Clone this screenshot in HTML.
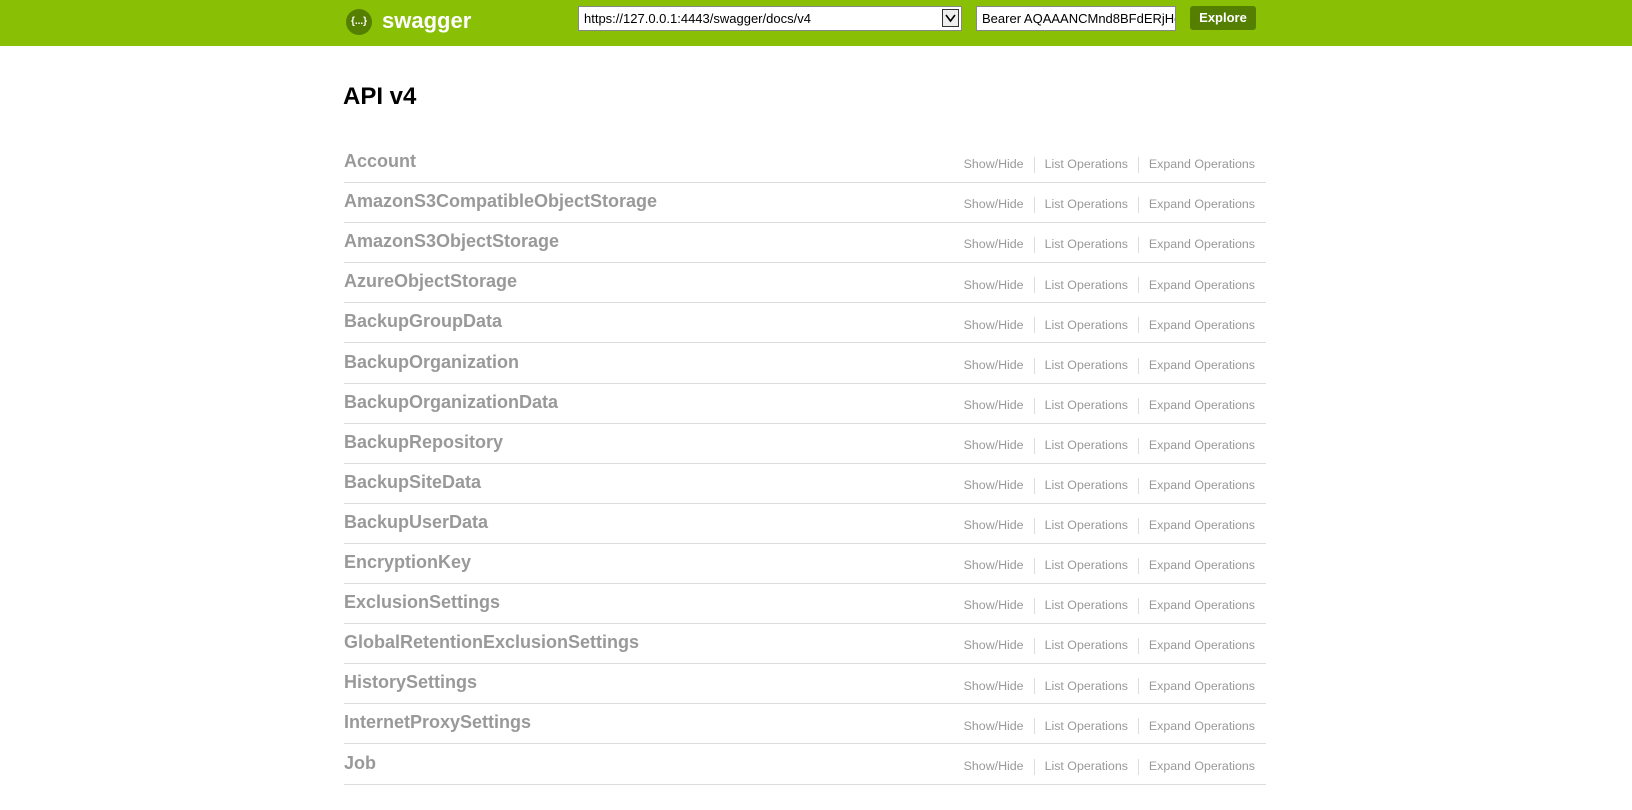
<!DOCTYPE html>
<html><head><meta charset="utf-8"><style>
body{margin:0;background:#fff;font-family:"Liberation Sans",Arial,sans-serif;width:1632px;height:810px;overflow:hidden;position:relative}
.hdr{position:absolute;left:0;top:0;width:1632px;height:46px;background:#89bf04}
.logo{position:absolute;left:346px;top:9px;width:26px;height:26px;border-radius:50%;background:#547f00;color:#fff;font-size:10px;font-weight:bold;text-align:center;line-height:26px}
.brand{position:absolute;left:382px;top:8px;color:#fff;font-weight:bold;font-size:22px}
.sel{position:absolute;left:578px;top:6px;width:384px;height:25px;background:#fff;border:1px solid #888;box-sizing:border-box;font-size:13px;line-height:23px;padding-left:5px}
.arr{position:absolute;right:2px;top:2px;width:17px;height:18px;border:1px solid #333;box-sizing:border-box;background:#eee}
.inp{position:absolute;left:976px;top:6px;width:200px;height:25px;background:#fff;border:1px solid #888;box-sizing:border-box;font-size:13px;line-height:23px;padding-left:5px;overflow:hidden;white-space:nowrap}
.btn{position:absolute;left:1190px;top:6px;width:66px;height:24px;background:#547f00;border-radius:3px;color:#fff;font-weight:bold;font-size:13px;text-align:center;line-height:24px}
h1{position:absolute;left:343px;top:83px;margin:0;font-size:24px;font-weight:bold;color:#000}
.row{position:absolute;left:344px;width:922px;height:40px;border-bottom:1px solid #ddd;box-sizing:border-box}
.row b{position:absolute;left:0;top:8px;font-size:18px;color:#999}
.ops{position:absolute;right:11px;top:14px;font-size:12.4px;color:#999}
.ops span{display:inline-block}
.sep{display:inline-block;width:1px;height:16px;background:#ddd;vertical-align:middle;margin:0 10px}
</style></head><body>
<div class="hdr">
<div class="logo">{...}</div><div class="brand">swagger</div>
<div class="sel">https://127.0.0.1:4443/swagger/docs/v4<div class="arr"><svg width="15" height="16" viewBox="0 0 15 16"><path d="M3 5l4.5 6L12 5" stroke="#000" stroke-width="1.6" fill="none"/></svg></div></div>
<div class="inp">Bearer AQAAANCMnd8BFdERjHoAwE</div>
<div class="btn">Explore</div>
</div>
<h1>API v4</h1>
<div id="rows"></div>
<script>
var n=["Account","AmazonS3CompatibleObjectStorage","AmazonS3ObjectStorage","AzureObjectStorage","BackupGroupData","BackupOrganization","BackupOrganizationData","BackupRepository","BackupSiteData","BackupUserData","EncryptionKey","ExclusionSettings","GlobalRetentionExclusionSettings","HistorySettings","InternetProxySettings","Job"];
var h="";for(var i=0;i<n.length;i++){h+='<div class="row" style="top:'+(143+i*40.1).toFixed(1)+'px"><b>'+n[i]+'</b><div class="ops"><span>Show/Hide</span><i class="sep"></i><span>List Operations</span><i class="sep"></i><span>Expand Operations</span></div></div>';}
document.getElementById("rows").innerHTML=h;
</script>
</body></html>
